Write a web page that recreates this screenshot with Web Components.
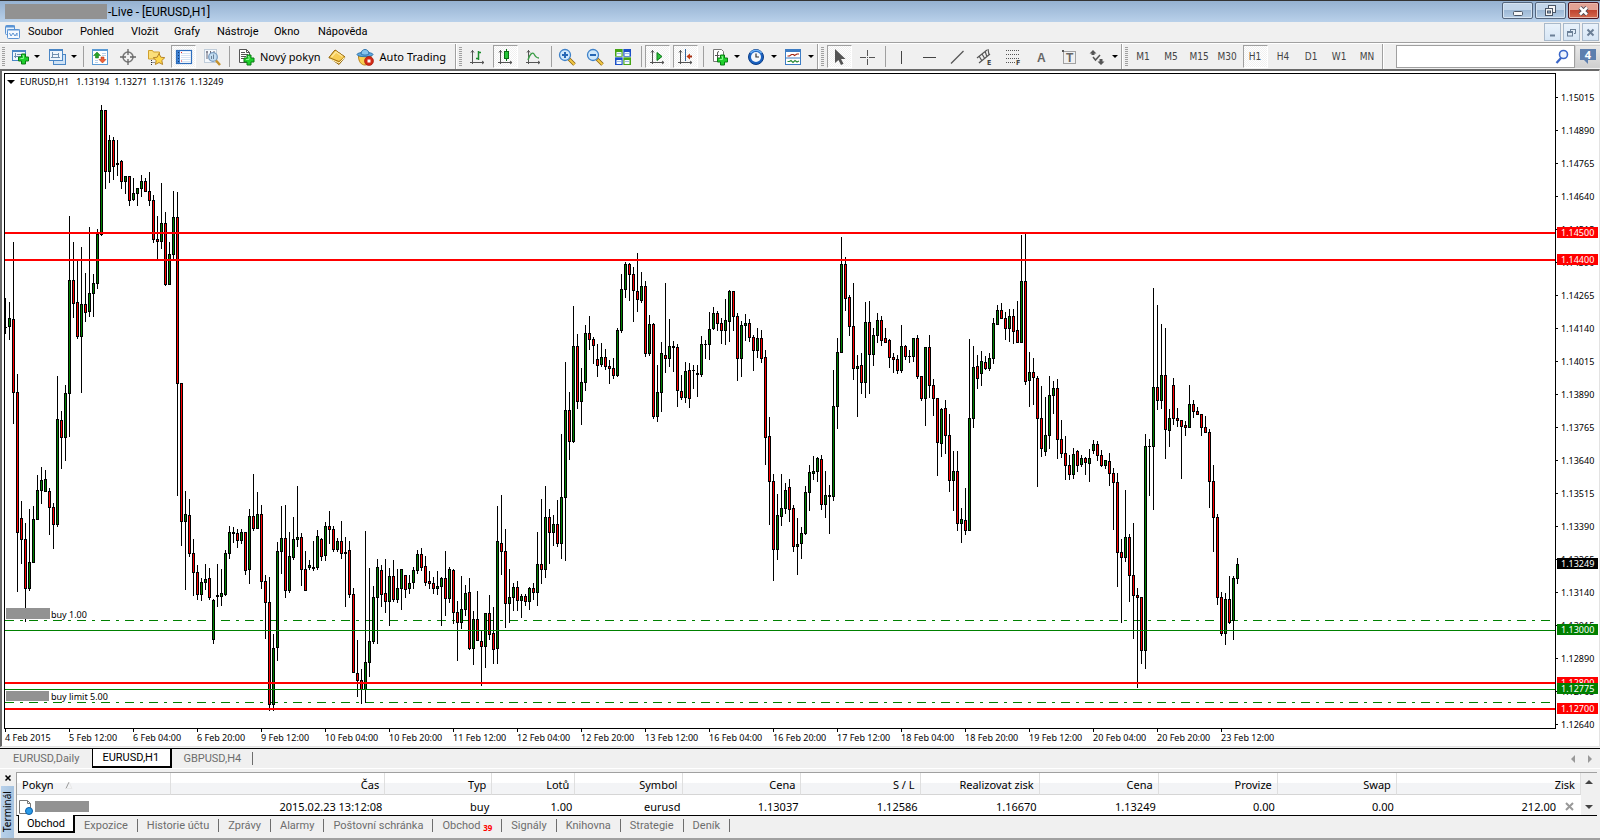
<!DOCTYPE html>
<html lang="cs">
<head>
<meta charset="utf-8">
<title>EURUSD,H1</title>
<style>
html,body{margin:0;height:100%}
body{background:#f0f0f0;color:#000;font:11px/14px "Noto Sans","Open Sans",sans-serif}
</style>
</head>
<body>
<trade-window></trade-window>
<script>
const shadow = (el, html) => { const r = el.attachShadow({mode:'open'}); r.innerHTML = html; return r; };

const AXES = '<path d="M4.5 2v14M2 14.5h14M3 4.5l1.500-2 1.500 2M14 13l2 1.500-2 1.500" stroke="#555" fill="none"/>';
const PLUS = (x,y) => `<path d="M${x+3} ${y}h4v3h3v4h-3v3h-4v-3h-3v-4h3z" fill="#1fd02c" stroke="#0a7d14"/><path d="M${x+4} ${y+1.5}h1v3h-3" stroke="#8df594" fill="none"/>`;
const ICONS = {
  newChart:`<rect x="1.500" y="2.500" width="13" height="10" fill="#eef5fc" stroke="#4a86c5"/><path d="M1 3h14" stroke="#4a86c5" stroke-width="2"/><path d="M4.500 5v5M3 8.500h8M6 6.500h4" stroke="#6f8fb0" fill="none"/>${PLUS(7.5,6)}`,
  profiles:'<rect x="5.500" y="6.500" width="12" height="10" fill="#cfe2f5" stroke="#4a86c5"/><rect x="1.500" y="1.500" width="13" height="11" fill="#eef5fc" stroke="#4a86c5"/><path d="M1 2h14" stroke="#4a86c5" stroke-width="2"/><path d="M4.500 4v6M3 9.500h9M4 6.500h7M10.500 5v5" stroke="#6f8fb0" fill="none"/>',
  market:'<rect x="1.500" y="1.500" width="15" height="15" fill="#fff" stroke="#5b9bd5"/><path d="M1 2h16" stroke="#5b9bd5" stroke-width="2"/><path d="M6 4l3.500 3.500H7.500V10h-3V7.500H2.500z" fill="#28a428" stroke="#0e6e12" stroke-width=".5"/><path d="M11.500 15L8 11.500h2V9h3v2.500h2z" fill="#f0623a" stroke="#a9300f" stroke-width=".5"/><path d="M11 5.500h4M11 7.500h4M4 12.500h3M4 14.500h3" stroke="#b8d0e8"/>',
  crosshair:'<circle cx="9" cy="9" r="5" fill="none" stroke="#777" stroke-width="1.500"/><path d="M9 1v6M9 11v6M1 9h6M11 9h6" stroke="#666" stroke-width="1.300"/>',
  folderStar:'<path d="M1.500 2.500h4l1 1.500h6v7h-11z" fill="#fbdf7a" stroke="#cf9f2c"/><path d="M4.500 12v5M4.500 14.500h4" stroke="#333" stroke-dasharray="1 1" fill="none"/><path d="M12 5.500l1.800 3.700 4 .5-3 2.800.8 4-3.600-2-3.600 2 .8-4-3-2.800 4-.5z" fill="#ffd84a" stroke="#b8862a"/>',
  dataWindow:'<rect x="1.500" y="2.500" width="15" height="13" fill="#fff" stroke="#2e6ebd" stroke-width="1.200"/><rect x="2" y="3" width="3" height="12" fill="#3d7fd0"/><path d="M3.500 4v10" stroke="#10386c" stroke-dasharray="1 2"/><path d="M6 5.500h10M6 7.500h10M6 9.500h10M6 11.500h10M6 13.500h10" stroke="#d6e4f3"/><path d="M6 4.500h1M6 13h1" stroke="#e22"/>',
  tester:'<path d="M1.500 1.500h12v13h-12z" fill="#f4f8fc" stroke="#8ea6bf" stroke-dasharray="1 1"/><path d="M4 3v8M3 4h2M7.500 3v5M11 3v6" stroke="#667" fill="none"/><circle cx="10" cy="9" r="4.300" fill="#c4def2" stroke="#7b9dc0" stroke-width="1.300"/><path d="M10.500 6.500v4.500M8.500 8v3" stroke="#6b8199"/><path d="M13 12.500l4 4.500" stroke="#c4912c" stroke-width="2.500"/>',
  newOrder:`<path d="M2.500 1.500h7l3 3v10h-10z" fill="#fff" stroke="#555"/><path d="M9.500 1.500v3h3" fill="none" stroke="#555"/><path d="M4 4.500h4M4 6.500h7M4 8.500h5M4 10.500h3" stroke="#555"/>${PLUS(7,7)}`,
  book:'<path d="M1 9.500L7 2l10 7-6 7.500z" fill="#dc9c22" stroke="#93660f"/><path d="M1 9.500L7 2l10 7-6 4.500z" fill="#f7cd55" stroke="#93660f" stroke-width=".8"/><path d="M2 11l9 4 5.500-5.500" stroke="#fff3c0" fill="none"/><path d="M3.500 9L8 4l6.500 4.500" stroke="#ffe79a" fill="none" stroke-width="1.500"/>',
  autoTrading:'<path d="M2.500 8c0 6 3 9 6.500 9s6-4 6-9z" fill="#f8cf50" stroke="#b98018"/><ellipse cx="9" cy="6.500" rx="8" ry="2.200" fill="#5fa9de" stroke="#2f75ae"/><path d="M5 6c0-6 8-6 8 0-2 1.500-6 1.500-8 0z" fill="#86c5ee" stroke="#2f75ae"/><circle cx="13" cy="13" r="4.500" fill="#d22a16" stroke="#a01606" stroke-width=".6"/><rect x="11.500" y="11.500" width="3" height="3" fill="#fff"/>',
  bars:AXES+'<path d="M10.500 3v9M11 4.500h2M8 10.500h2" stroke="#1c8c2c" stroke-width="1.500" fill="none"/>',
  candles:AXES+'<path d="M10.500 1v12" stroke="#0a7015"/><rect x="8.500" y="3.500" width="4" height="7" fill="#25c437" stroke="#0a7015"/>',
  line:AXES+'<path d="M4 12C6 5 9 4 10 6s3 4 5 4" stroke="#3a9c46" stroke-width="1.300" fill="none"/>',
  zoomIn:'<path d="M11 11l5.500 5.500" stroke="#8a6414" stroke-width="3.500"/><path d="M11.500 11.500l5 5" stroke="#f3c945" stroke-width="2"/><circle cx="7" cy="7" r="5.500" fill="#cfe8fb" stroke="#3f82c9" stroke-width="1.300"/><path d="M7 4v6M4 7h6" stroke="#2567b5" stroke-width="2"/>',
  zoomOut:'<path d="M11 11l5.500 5.500" stroke="#8a6414" stroke-width="3.500"/><path d="M11.500 11.500l5 5" stroke="#f3c945" stroke-width="2"/><circle cx="7" cy="7" r="5.500" fill="#cfe8fb" stroke="#3f82c9" stroke-width="1.300"/><path d="M4 7h6" stroke="#2567b5" stroke-width="2"/>',
  tile:'<path d="M1 1h8v8H1zM9 9h8v8H9z" fill="#46a516"/><path d="M9 1h8v8H9zM1 9h8v8H1z" fill="#1c50c8"/><path d="M2.500 4h5v4h-5zM10.500 4h5v4h-5zM2.500 12h5v4h-5zM10.500 12h5v4h-5z" fill="#f4fbff"/><path d="M3 5.500h4M11 5.500h4M3 13.500h4M11 13.500h4" stroke="#9bb8e0"/><path d="M9 1v16M1 9h16" stroke="#e8f0f8" stroke-width=".7"/>',
  autoScroll:AXES+'<path d="M9 4.500l5 4-5 4z" fill="#2fc03c" stroke="#0b7a18"/>',
  shift:AXES+'<path d="M9.500 1v12" stroke="#35679c"/><path d="M16 8.500h-3" stroke="#a32c10" stroke-width="2"/><path d="M10.500 8.500l3.500-3v6z" fill="#c43a12"/>',
  indicators:`<path d="M3.500 1.500h8l2 2v10h-10z" fill="#fff" stroke="#777"/><path d="M7.500 11V5q0-1.500 1.500-1.500M5 7.500h4.500" stroke="#555" fill="none"/>${PLUS(7.5,7)}`,
  clock:'<circle cx="9" cy="9" r="7.500" fill="#1b62c0" stroke="#0c3d86"/><path d="M3.500 5a7 7 0 0 1 11 0" stroke="#6db2f5" stroke-width="1.500" fill="none"/><circle cx="9" cy="9" r="5" fill="#f4f8fc"/><path d="M9 5.500V9h3" stroke="#333" fill="none" stroke-width="1.200"/>',
  template:'<rect x="1.500" y="1.500" width="15" height="15" fill="#fff" stroke="#3c7cc4"/><path d="M1 2.500h16" stroke="#3c7cc4" stroke-width="3"/><path d="M1 10h16" stroke="#3c7cc4"/><path d="M3.500 8h2l2-1.500h2l1 1L13 6h2" stroke="#a42714" fill="none" stroke-width="1.200"/><path d="M3.500 13.500h2l1.500-1 2 2 2-2 2 1.500 2-1" stroke="#2b8a35" fill="none" stroke-width="1.200"/>',
  cursor:'<path d="M5 1v14l3.500-3 2.500 5 2.500-1.200L11 11h4.500z" fill="#555"/>',
  cross:'<path d="M9.500 2v6M9.500 11v6M2 9.500h6M11 9.500h6" stroke="#555"/><path d="M9 9.500h1" stroke="#555"/>',
  vline:'<path d="M9.500 3v13" stroke="#444"/>',
  hline:'<path d="M3 9.500h13" stroke="#444"/>',
  trend:'<path d="M3 15.500L15.500 3" stroke="#555" stroke-width="1.200"/>',
  channel:'<path d="M1 10l10-8M3 15L14 6M3 8l3 5M6 6l3 5M9 3l2 6M12 1l1 6" stroke="#555" fill="none" stroke-width="1.200"/><text x="11" y="17" font-family="DejaVu Sans Condensed" font-size="7" font-weight="bold" fill="#444">E</text>',
  fibo:'<path d="M2 2.500h13M2 6.500h13M2 10.500h13M2 14.500h9" stroke="#555" stroke-dasharray="1 1"/><text x="12" y="17" font-family="DejaVu Sans Condensed" font-size="7" font-weight="bold" fill="#444">F</text>',
  text:'<text x="5" y="14" font-family="Liberation Sans" font-size="12" font-weight="bold" fill="#666">A</text>',
  label:'<rect x="3.500" y="3.500" width="12" height="12" fill="none" stroke="#555" stroke-dasharray="1 1"/><rect x="2" y="2" width="2" height="2" fill="#555"/><text x="6" y="14" font-family="Liberation Sans" font-size="12" font-weight="bold" fill="#666">T</text>',
  arrows:'<path d="M5 2l3.500 3.500H6.500V7h-3V5.500H1.500z" fill="#555"/><path d="M13 17l-3.500-3.500h2V11h3v2.500h2z" fill="#555"/><path d="M5 9l2.500 3L12 7" stroke="#555" stroke-width="1.500" fill="none"/>'
};

class ToolButton extends HTMLElement {
  connectedCallback() {
    const icon = this.getAttribute('icon');
    shadow(this, `<style>
      :host{display:flex;flex:none}
      button{all:unset;display:flex;align-items:center;height:23px;min-width:28px;box-sizing:border-box;white-space:nowrap}
      .face{display:flex;align-items:center;justify-content:center;box-sizing:border-box;width:25px;height:23px;margin:0 2px 0 1px;border:1px solid transparent}
      :host([pressed]) .face{border-color:#a0a0a0 #fff #fff #a0a0a0;background:repeating-conic-gradient(#fff 0 25%,#f0f0f0 0 50%) 0 0/2px 2px}
      :host([drop]) button{width:37px}
      svg{flex:none}
      .arrow{border:3px solid transparent;border-top:3px solid #000;border-bottom:0}
      .txt{flex:none;font:10px/14px "DejaVu Sans Condensed",sans-serif;color:#444}
      .caption{padding-right:3px}
      :host([wide]) button{width:103px}
    </style><button type="button" aria-label="${this.getAttribute('label') || this.textContent}" ${this.hasAttribute('pressed')?'aria-pressed="true"':''}>
      <span class="face">${icon ? `<svg width="18" height="18" viewBox="0 0 18 18">${ICONS[icon]}</svg>` : '<span class="txt"><slot></slot></span>'}</span>
      ${icon && this.textContent ? '<span class="caption"><slot></slot></span>' : ''}
      ${this.hasAttribute('drop') ? '<span class="arrow"></span>' : ''}
    </button>`);
  }
}
customElements.define('tool-button', ToolButton);

class ToolGroup extends HTMLElement {
  connectedCallback() {
    shadow(this, `<style>
      :host{display:flex;align-items:center;flex:none;box-sizing:border-box;height:25px}
      :host([ruled]){border-left:1px solid #a0a0a0;box-shadow:inset 1px 0 #fff}
      .grip{flex:none;width:3px;height:20px;margin:0 1px 0 2px;background:repeating-linear-gradient(#a0a0a0 0 1px,#f0f0f0 1px 2px)}
      :host([ruled]) .grip{margin:0 2px 0 3px}
      ::slotted(i){flex:none;width:1px;height:21px;margin:0 2px 0 3px;background:#a0a0a0}
    </style><span class="grip"></span><slot></slot>`);
  }
}
customElements.define('tool-group', ToolGroup);

customElements.define('title-bar', class extends HTMLElement {
  connectedCallback() {
    shadow(this, `<style>
      :host{display:flex;align-items:center;height:22px;box-sizing:border-box;border-top:1px solid #333;padding:0 1px 0 5px;background:linear-gradient(#95b1d1,#b9d1ea);font:12px/16px Roboto,sans-serif}
      .hidden{width:102px;height:15px;background:#929292}
      .title{flex:1;padding-left:1px}
      .keys{display:flex;gap:2px;align-self:flex-start;padding-top:1px}
      button{all:unset;box-sizing:border-box;width:31px;height:17px;display:flex;align-items:center;justify-content:center;border:1px solid #54657c;border-radius:2px;background:linear-gradient(#c3d6ea 0 45%,#9db8d5 50%,#b5cde6);box-shadow:inset 0 0 0 1px #d5e3f1}
      button.close{border-color:#4c1620;background:linear-gradient(#e2a294 0 45%,#c04430 50%,#d3694e);box-shadow:inset 0 0 0 1px #e9b9ad}
    </style>
    <span class="hidden"></span><span class="title">-Live - [EURUSD,H1]</span>
    <div class="keys">
      <button type="button" aria-label="Minimalizovat"><svg width="12" height="12"><rect x="1.500" y="6.500" width="9" height="4" rx="1" fill="#f6f6f6" stroke="#4b5666"/></svg></button>
      <button type="button" aria-label="Obnovit"><svg width="13" height="13"><rect x="4.500" y="1.500" width="7" height="7" fill="#f6f6f6" stroke="#4b5666"/><rect x="1.500" y="4.500" width="7" height="7" fill="#f6f6f6" stroke="#4b5666"/><rect x="3.500" y="7" width="3" height="2" fill="#9db8d5" stroke="#4b5666"/></svg></button>
      <button type="button" class="close" aria-label="Zavřít"><svg width="13" height="12"><path d="M3 2.500l7 7M10 2.500l-7 7" stroke="#4b4b55" stroke-width="4.500"/><path d="M3 2.500l7 7M10 2.500l-7 7" stroke="#fff" stroke-width="2.500"/></svg></button>
    </div>`);
  }
});

customElements.define('menu-bar', class extends HTMLElement {
  connectedCallback() {
    const items = ['Soubor','Pohled','Vložit','Grafy','Nástroje','Okno','Nápověda'];
    shadow(this, `<style>
      :host{display:flex;align-items:center;height:21px;box-sizing:border-box;padding:0 1px 0 5px;border-bottom:1px solid #a0a0a0;font:11px/16px Roboto,sans-serif}
      nav{flex:1;display:grid;grid-template-columns:52px 51px 43px 43px 57px 44px auto;justify-content:start;padding-left:8px}
      nav button{all:unset}
      .mdi{display:flex;gap:2px}
      .mdi button{all:unset;box-sizing:border-box;width:17px;height:18px;border:1px solid #a9b9ca;background:linear-gradient(#e9f2fb,#d7e6f5);display:flex;align-items:center;justify-content:center}
    </style>
    <svg width="15" height="15" viewBox="0 0 15 15"><rect x=".5" y=".5" width="9" height="9" rx="1" fill="#e8f1fb" stroke="#5b93d3"/><path d="M1 1.500h9" stroke="#5b93d3" stroke-width="2"/><rect x="2.500" y="4.500" width="12" height="9" rx="1" fill="#f4f9ff" stroke="#5b93d3"/><path d="M2 5h13" stroke="#5b93d3"/><path d="M4.500 8l1.500 3 2-3 2 3 2-3v3" stroke="#5b93d3" fill="none"/></svg>
    <nav>${items.map(t => `<button type="button">${t}</button>`).join('')}</nav>
    <div class="mdi">
      <button type="button" aria-label="Minimalizovat graf"><svg width="9" height="9"><path d="M2 7.500h5" stroke="#6b7f96" stroke-width="2"/></svg></button>
      <button type="button" aria-label="Obnovit graf"><svg width="9" height="9"><path d="M3.500 3V1.500h5v4H7M3 1.500h6" fill="none" stroke="#6b7f96"/><rect x=".5" y="4" width="5" height="4" fill="none" stroke="#6b7f96"/><path d="M0 4h6" stroke="#6b7f96" stroke-width="2"/></svg></button>
      <button type="button" aria-label="Zavřít graf"><svg width="9" height="9"><path d="M1.500 1.500l6 6M7.500 1.500l-6 6" stroke="#6b7f96" stroke-width="2"/></svg></button>
    </div>`);
  }
});

customElements.define('tool-bar', class extends HTMLElement {
  connectedCallback() {
    const b = (icon, label, extra='') => `<tool-button icon="${icon}" label="${label}" ${extra}></tool-button>`;
    const periods = ['M1','M5','M15','M30','H1','H4','D1','W1','MN'];
    shadow(this, `<style>
      :host{display:flex;align-items:center;height:26px;box-sizing:border-box;border-top:1px solid #fff}
      .find{flex:1;display:flex;align-items:center;height:25px;border-left:1px solid #a0a0a0;box-shadow:inset 1px 0 #fff;padding:0 1px 0 13px;box-sizing:border-box}
      label{flex:1;display:flex;align-items:center;height:23px;box-sizing:border-box;border:1px solid #a0a0a0;background:#fff;padding-right:5px;min-width:0}
      input{all:unset;flex:1;min-width:0;height:20px}
      .chat{all:unset;flex:none;width:32px;height:23px;box-sizing:border-box;border:1px solid #d0d0d0;background:linear-gradient(#e8e8e8,#cfcfcf);display:flex;align-items:center;justify-content:center}
      .chat svg{margin-right:4px}
    </style>
    <tool-group>${b('newChart','Nový graf','drop')}${b('profiles','Profily','drop')}<i></i>${b('market','Market Watch')}${b('crosshair','Data Window')}${b('folderStar','Navigátor')}${b('dataWindow','Terminál','pressed')}${b('tester','Strategy Tester')}<i></i><tool-button icon="newOrder">Nový pokyn</tool-button>${b('book','MetaEditor')}<tool-button icon="autoTrading" wide>Auto Trading</tool-button></tool-group>
    <tool-group ruled>${b('bars','Sloupce')}${b('candles','Svíčky','pressed')}${b('line','Čára')}<i></i>${b('zoomIn','Přiblížit')}${b('zoomOut','Oddálit')}${b('tile','Dlaždice')}<i></i>${b('autoScroll','Auto posun','pressed')}${b('shift','Odsazení','pressed')}<i></i>${b('indicators','Indikátory','drop')}${b('clock','Periody','drop')}${b('template','Šablony','drop')}</tool-group>
    <tool-group ruled>${b('cursor','Kurzor','pressed')}${b('cross','Kříž')}<i></i>${b('vline','Svislá čára')}${b('hline','Vodorovná čára')}${b('trend','Trend')}${b('channel','Kanál')}${b('fibo','Fibonacci')}${b('text','Text')}${b('label','Popisek')}${b('arrows','Šipky','drop')}</tool-group>
    <tool-group ruled>${periods.map(p => `<tool-button ${p==='H1'?'pressed':''}>${p}</tool-button>`).join('')}</tool-group>
    <div class="find">
      <label><input type="search" aria-label="Hledat"><svg width="14" height="16" viewBox="0 0 14 16"><circle cx="8.500" cy="5.500" r="4" fill="#eef4fd" stroke="#3a66c8" stroke-width="1.600"/><path d="M6 9l-4.500 5" stroke="#3a66c8" stroke-width="2.200"/></svg></label>
      <button class="chat" type="button" aria-label="Zprávy"><svg width="17" height="17" viewBox="0 0 17 17"><path d="M0 1h16v11H8v4l-4-4H0z" fill="#5d7fae"/><text x="8" y="11" text-anchor="middle" font-family="Noto Sans" font-size="11" font-weight="bold" fill="#fff">4</text></svg></button>
    </div>`);
  }
});

/* One bar per hour: direction, high, body top, body bottom, low (canvas rows). */
const BARS = `G298,327,328,334 G302,318,327,340 R242,319,393,424 R374,392,533,592 R501,518,540,564 R523,539,589,622 G509,562,589,591 G506,519,563,563 G475,490,520,520 G467,480,491,504
G470,479,492,492 R488,491,508,535 R503,507,525,549 G376,419,525,527 R411,420,438,469 G385,393,438,461 G216,280,394,437 R242,280,304,318 R260,302,337,339 G247,304,337,393
R273,304,313,322 G227,293,312,317 G274,283,294,317 G229,234,284,289 G105,110,235,236 R110,110,172,189 G135,140,172,183 R137,140,167,180 G140,163,165,176 R160,161,182,189
G176,176,182,194 R176,176,201,206 G178,193,200,201 G188,188,194,206 G175,181,189,197 R178,181,192,192 R172,191,201,206 R195,200,240,243 R216,239,242,259 G183,223,242,249
R212,223,285,286 G242,254,285,285 G191,217,255,259 R192,217,384,496 R383,383,522,546 G491,514,522,590 R499,515,554,557 R539,553,573,596 R565,572,595,600 G578,582,595,601
G564,579,583,590 R568,578,598,600 G599,600,640,644 G564,595,597,607 G569,593,597,606 G550,553,595,596 G526,532,554,559 G527,532,534,543 R529,533,541,548 G529,532,541,544
R532,532,571,575 G509,516,570,584 R474,516,529,531 G492,514,529,529 R505,514,582,589 R575,581,603,639 R577,602,705,711 G634,648,705,711 G542,551,648,661 G506,538,552,574
R505,538,591,598 G532,556,591,593 G517,539,558,560 G486,537,540,547 R533,537,570,586 R551,569,591,591 G560,565,568,570 G541,567,569,571 G530,536,568,570 R538,539,557,561
G522,526,556,561 R511,526,530,544 R526,529,550,552 G538,541,550,552 R521,541,554,559 G537,552,554,607 R541,550,595,598 R588,594,673,673 R640,673,681,697 R669,680,690,704
G531,662,690,703 G568,641,663,677 G586,597,642,644 G559,567,598,644 R565,570,595,607 R559,593,602,613 G568,576,602,626 R560,576,600,602 G569,588,600,603 G569,569,589,610
R575,575,590,598 G575,583,589,594 G567,570,583,589 G550,554,571,574 R548,554,568,571 R556,566,583,586 R571,581,584,589 R577,583,589,594 G571,586,589,595 G577,578,587,626
R551,578,599,616 G567,569,599,603 R569,570,613,624 R601,612,623,661 G576,609,623,629 G585,593,610,616 R578,592,649,650 G611,619,649,665 R591,619,641,641 R631,641,647,686
G613,613,647,668 R595,613,635,640 R607,633,650,664 G506,541,649,664 R495,543,552,575 R529,551,604,628 G569,597,604,623 G583,587,598,611 R581,587,601,611 G594,596,601,618
R594,596,602,606 G587,588,602,610 R583,588,593,600 G532,564,593,606 R499,564,570,584 G486,517,570,578 R509,517,533,564 G515,524,533,546 R500,524,544,547 G434,497,544,559
G362,410,498,561 R392,410,442,460 G306,346,442,443 R334,346,402,409 G368,382,402,425 G325,333,383,391 R316,333,340,350 R337,339,346,364 R344,359,366,377 G343,357,365,367
R349,357,367,370 R360,366,369,384 R358,368,376,379 G328,330,376,377 G274,289,331,333 G262,264,290,298 R263,264,275,301 R267,274,291,322 R253,291,300,312 G272,286,301,303
R281,286,354,357 G315,324,354,356 R323,324,417,419 G365,392,417,422 G342,353,393,412 R283,355,359,373 G319,346,359,367 G341,346,348,372 R344,347,391,407 R375,391,398,400
G362,371,398,403 R363,370,399,408 G365,370,371,389 G365,373,375,397 G336,344,375,377 G340,344,345,359 G312,329,345,360 G307,313,329,330 R311,313,324,331 R318,323,331,344
G299,320,331,345 G290,291,322,342 R291,291,317,331 R313,316,359,381 G321,325,359,377 G314,323,326,341 R319,323,338,342 R335,337,351,371 G328,338,351,358 R330,338,359,363
R350,357,438,465 R417,436,482,525 R474,481,550,581 G494,515,550,560 G474,508,517,526 G483,490,509,514 R479,487,510,522 R505,508,547,552 G518,544,547,575 G527,533,544,559
G486,492,534,535 G465,472,493,511 G456,471,474,480 G457,458,472,482 R455,459,505,510 G471,495,505,518 G485,495,497,534 G370,406,497,501 G338,352,407,429 G237,264,353,353
R257,264,299,311 R295,297,327,336 R283,326,369,380 G355,366,369,417 R353,365,383,394 G302,322,383,398 R301,322,355,394 G328,335,355,366 G313,320,336,343 R316,320,341,346
R328,338,343,343 R339,340,358,368 R353,357,360,373 R355,359,371,374 G325,346,371,373 R345,346,357,360 G350,356,357,363 G338,338,357,362 R335,338,377,379 R376,376,399,401
G347,347,399,426 R335,347,386,398 R379,385,399,416 R398,398,443,476 G408,409,444,457 R400,408,436,454 R414,435,481,492 G451,471,481,511 R451,471,524,531 G508,519,524,543
R488,520,531,535 G339,418,531,531 G346,367,419,428 R355,366,379,389 G351,361,374,386 R356,362,369,370 G353,358,369,371 G318,323,359,364 G305,310,325,325 R303,310,319,319
R312,318,329,340 G309,316,329,342 R309,316,332,344 R301,330,343,343 G235,281,343,343 R234,281,382,385 G352,372,381,407 R358,372,378,405 R376,378,419,487 R386,418,449,457
G397,435,452,456 G376,395,436,449 G381,388,396,414 R379,388,440,459 R420,439,454,458 R436,453,466,480 R455,465,475,480 G448,454,475,479 R450,451,466,472 G455,458,465,467
R457,458,463,475 G449,458,464,482 G440,444,451,454 R441,444,456,461 R450,455,466,467 G460,460,466,469 R453,461,474,486 R468,473,483,530 R473,482,553,587 R539,552,558,623
G490,537,558,562 R534,537,576,602 R523,575,596,639 R588,595,598,688 R597,597,651,664 G434,446,651,669 G439,446,447,496 G288,387,447,510 R305,387,401,410 G324,375,401,409
R328,375,430,459 G409,418,431,447 R378,385,419,425 R408,418,421,427 R420,420,427,479 R421,425,428,436 G385,404,428,428 R400,404,412,418 R407,411,415,415 R414,414,428,436
R416,427,433,433 R429,432,482,508 R465,481,518,552 R514,517,598,605 R592,597,634,636 G593,599,634,645 R576,599,623,624 G576,578,621,640 G558,564,579,584`.split(/\s+/);

customElements.define('price-chart', class extends HTMLElement {
  connectedCallback() {
    const wicks = [], shells = [], up = [], down = [];
    BARS.forEach((bar, i) => {
      const x = 5 + i * 4, [hi, top, bot, lo] = bar.slice(1).split(',').map(Number);
      wicks.push(`M${x} ${hi}h1V${lo}h-1z`);
      shells.push(`M${x-1} ${top}h3V${bot}h-3z`);
      if (bot - top > 2) (bar[0] === 'G' ? up : down).push(`M${x} ${top+1}h1V${bot-1}h-1z`);
    });
    const rule = (y, h, c) => `<rect x="5" y="${y}" width="100%" height="${h}" fill="${c}"/>`;
    const dash = y => `<line x1="5" x2="100%" y1="${y}.5" y2="${y}.5" stroke="#008000" stroke-dasharray="9 6 3 6"/>`;
    const days = '4 Feb 2015|5 Feb 12:00|6 Feb 04:00|6 Feb 20:00|9 Feb 12:00|10 Feb 04:00|10 Feb 20:00|11 Feb 12:00|12 Feb 04:00|12 Feb 20:00|13 Feb 12:00|16 Feb 04:00|16 Feb 20:00|17 Feb 12:00|18 Feb 04:00|18 Feb 20:00|19 Feb 12:00|20 Feb 04:00|20 Feb 20:00|23 Feb 12:00'.split('|');
    const prices = Array.from({length:20}, (_, k) => ((115015 - 125 * k) / 100000).toFixed(5));
    const tags = [[227,'#f00','1.14500'],[254,'#f00','1.14400'],[558,'#000','1.13249'],[624,'#008000','1.13000'],[677,'#f00','1.12800'],[683,'#008000','1.12775'],[703,'#f00','1.12700']];
    shadow(this, `<style>
      :host{display:grid;grid-template-columns:minmax(0,1fr) 43px;grid-template-rows:minmax(0,1fr) 17px;flex:1;min-height:0;box-sizing:border-box;background:#fff;
        border:solid;border-width:2px 1px 1px 2px;border-color:#696969 #e3e3e3 #e3e3e3 #696969;padding:2px 0 0 2px;font:9px/11px "Noto Sans",sans-serif}
      .plot{position:relative;border:1px solid #000;min-height:0;overflow:hidden}
      .plot svg{position:absolute;inset:0;width:100%;height:100%;display:block}
      .head{position:relative;display:flex;align-items:center;gap:5px;padding:2px 0 0 2px}
      .head i{border:4px solid transparent;border-top:4px solid #000;border-bottom:0}
      .head span{white-space:pre}
      .scale{position:relative;padding-top:8px;min-height:0}
      .scale div{height:33px;display:flex;align-items:center}
      .scale div::before{content:"";width:2px;height:1px;background:#000;margin-right:3px}
      .scale b{position:absolute;left:1px;right:1px;height:11px;padding-left:4px;font-weight:normal;color:#fff}
      .days{grid-column:1/3;display:flex;padding-left:1px;overflow:hidden}
      .days span{flex:none;width:64px;white-space:nowrap}
      .days span::before{content:"";display:block;width:1px;height:3px;background:#000}
    </style>
    <div class="plot">
      <svg><g transform="translate(-5 -74)" shape-rendering="crispEdges">
        ${dash(620)}${dash(702)}
        <path d="${wicks.join('')}${shells.join('')}"/><path fill="#008000" d="${up.join('')}"/><path fill="#f00" d="${down.join('')}"/>
        ${rule(232,2,'#f00')}${rule(259,2,'#f00')}${rule(630,1,'#008000')}${rule(682,2,'#f00')}${rule(689,1,'#008000')}${rule(708,2,'#f00')}
        <rect x="6" y="608" width="44" height="11" fill="#929292"/><rect x="6" y="691" width="43" height="10" fill="#929292"/>
        <text x="51" y="618">buy 1.00</text><text x="51" y="700">buy limit 5.00</text>
      </g></svg>
      <div class="head"><i></i><span>EURUSD,H1   1.13194  1.13271  1.13176  1.13249</span></div>
    </div>
    <div class="scale">${prices.map(p => `<div>${p}</div>`).join('')}${tags.map(([y,c,t]) => `<b style="top:${y-73}px;background:${c}">${t}</b>`).join('')}</div>
    <div class="days">${days.map(d => `<span>${d}</span>`).join('')}</div>`);
  }
});

customElements.define('chart-tabs', class extends HTMLElement {
  connectedCallback() {
    shadow(this, `<style>
      :host{display:flex;flex:none;height:21px;margin-top:1px;border-top:1px solid #000;border-bottom:1px solid #fff;box-sizing:border-box;font:11px/16px Roboto,sans-serif;color:#6d6d6d}
      button{all:unset;box-sizing:border-box;height:19px;line-height:16px;padding:0 13px;white-space:nowrap}
      .on{width:80px;padding:0 9px;background:#fff;color:#000;border:1px solid #000;border-top:0;border-right-width:2px;border-bottom-width:2px}
      .end{border-right:1px solid #6d6d6d;height:13px;margin-top:3px;line-height:10px;padding:0 11px}
      .nav{margin-left:auto;display:flex;gap:13px;align-items:center;padding-right:8px}
      .l,.r{width:0;height:0;border:4px solid transparent;padding:0}
      .l{border-right:4px solid #999;border-left:0}.r{border-left:4px solid #999;border-right:0}
    </style>
    <button type="button">EURUSD,Daily</button><button type="button" class="on">EURUSD,H1</button><button type="button" class="end">GBPUSD,H4</button>
    <div class="nav"><button class="l" type="button" aria-label="Vlevo"></button><button class="r" type="button" aria-label="Vpravo"></button></div>`);
  }
});

customElements.define('terminal-panel', class extends HTMLElement {
  connectedCallback() {
    const cols = [['Pokyn',154],['Čas',214,'2015.02.23 13:12:08'],['Typ',107,'buy'],['Lotů',83,'1.00'],['Symbol',108,'eurusd'],['Cena',118,'1.13037'],['S / L',119,'1.12586'],['Realizovat zisk',119,'1.16670'],['Cena',119,'1.13249'],['Provize',119,'0.00'],['Swap',119,'0.00'],['Zisk',184,'212.00']];
    const tabs = ['Expozice','Historie účtu','Zprávy','Alarmy','Poštovní schránka','Obchod <sub>39</sub>','Signály','Knihovna','Strategie','Deník'];
    shadow(this, `<style>
      :host{display:grid;flex:none;grid-template-columns:16px minmax(0,1fr);grid-template-rows:44px 22px;margin-top:3px;padding-right:3px;border-bottom:2px solid #a0a0a0}
      .side{grid-row:1/3;display:flex;flex-direction:column;align-items:center;padding:2px 2px 0 1px}
      .side button{all:unset;height:12px;display:flex}
      .side h2{flex:1;width:13px;margin:0;writing-mode:vertical-rl;transform:rotate(180deg);font:10px/13px "Noto Sans",sans-serif;text-align:center;background:linear-gradient(90deg,#a6c3e0,#b9d1ea)}
      .grid{display:flex;border-top:1px solid #a0a0a0;border-left:1px solid #a0a0a0;border-bottom:1px solid #000;background:#fff;height:44px;box-sizing:border-box}
      table{flex:1;min-width:0;table-layout:fixed;border-collapse:separate;border-spacing:0}
      th,td{box-sizing:border-box;font-weight:normal;text-align:right;white-space:nowrap}
      th{height:22px;padding:2px 5px 0 0;border-right:1px solid #dfdfdf;border-bottom:1px solid #d5d5d5;background:linear-gradient(#fff 45%,#f3f4f6 50%)}
      td{height:20px;line-height:17px;padding:3px 3px 0 0}
      th:first-child{text-align:left;padding-left:5px}
      td:first-child{text-align:left;padding-left:2px}
      td:last-child svg{margin:0 4px 0 9px}
      .doc{display:flex;align-items:center;gap:2px;height:17px}
      .hid{width:54px;height:11px;background:#929292}
      .bar{width:16px;background:#f0f0f0;display:flex;flex-direction:column;justify-content:space-between;align-items:center;padding:7px 0 6px}
      .bar button{all:unset;border:4px solid transparent}
      .up{border-top:0!important;border-bottom:4px solid #444!important}.dn{border-bottom:0!important;border-top:4px solid #444!important}
      .tabs{display:flex;padding-left:2px;color:#6d6d6d;font:11px/13px Roboto,sans-serif}
      .tabs button{all:unset;height:13px;margin-top:3px;padding:0 9px;border-right:1px solid #6d6d6d;white-space:nowrap}
      .tabs .on{height:16px;line-height:18px;margin:-1px 0 0;padding:0 8px;background:#fff;color:#000;border:solid #000;border-width:0 2px 2px 1px}
      sub{font:bold 8px/8px "Noto Sans",sans-serif;color:#f00;vertical-align:-2px}
    </style>
    <div class="side"><button type="button" aria-label="Zavřít terminál"><svg width="8" height="8"><path d="M1.500 1.500l5 5M6.500 1.500l-5 5" stroke="#000" stroke-width="1.500"/></svg></button><h2>Terminál</h2></div>
    <div class="grid"><table>
      <colgroup>${cols.map(c => `<col style="width:${(c[1] / 1563 * 100).toFixed(3)}%">`).join('')}</colgroup>
      <thead><tr>${cols.map(([t],i) => `<th scope="col">${t}${i ? '' : '<svg width="8" height="8" style="margin-left:11px"><path d="M1 7.500L4 1" stroke="#999"/><path d="M4 1l3 6.500H1" stroke="#e8e8e8" fill="none"/></svg>'}</th>`).join('')}</tr></thead>
      <tbody><tr>${cols.map(([,,v],i) => i ? `<td>${v}${i === 11 ? '<svg width="9" height="9" viewBox="0 0 9 9"><path d="M1 1l7 7M8 1L1 8" stroke="#999" stroke-width="2"/></svg>' : ''}</td>` : '<td><span class="doc"><svg width="14" height="16" viewBox="0 0 14 16"><path d="M.5 1.500h8l3 3v10H.5z" fill="#fff" stroke="#777"/><path d="M8.500 1.500v3h3" fill="none" stroke="#777"/><circle cx="10" cy="12" r="3.500" fill="#2a9be8" stroke="#0c5ea8"/></svg><span class="hid"></span></span></td>').join('')}</tr></tbody>
    </table><div class="bar"><button class="up" type="button" aria-label="Nahoru"></button><button class="dn" type="button" aria-label="Dolů"></button></div></div>
    <div class="tabs"><button type="button" class="on">Obchod</button>${tabs.map(t => `<button type="button">${t}</button>`).join('')}</div>`);
  }
});

customElements.define('trade-window', class extends HTMLElement {
  connectedCallback() {
    shadow(this, `<style>:host{display:flex;flex-direction:column;height:100vh}title-bar,menu-bar,tool-bar{flex:none}</style>
      <title-bar></title-bar><menu-bar></menu-bar><tool-bar></tool-bar><price-chart></price-chart><chart-tabs></chart-tabs><terminal-panel></terminal-panel>`);
  }
});
</script>
</body>
</html>
